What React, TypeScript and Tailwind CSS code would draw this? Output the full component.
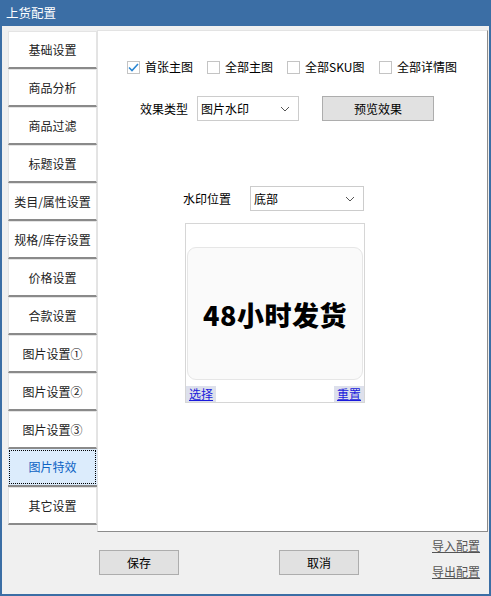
import React, { useState } from 'react';

const tabs = [
  '基础设置',
  '商品分析',
  '商品过滤',
  '标题设置',
  '类目/属性设置',
  '规格/库存设置',
  '价格设置',
  '合款设置',
  '图片设置①',
  '图片设置②',
  '图片设置③',
  '图片特效',
  '其它设置',
];

const imageTargets = [
  { label: '首张主图', width: 'w-[80px]' },
  { label: '全部主图', width: 'w-[80px]' },
  { label: '全部SKU图', width: 'w-[92px]' },
  { label: '全部详情图', width: 'w-[90px]' },
];

const Chevron: React.FC = () => (
  <svg width="10" height="6" viewBox="0 0 10 6" className="shrink-0">
    <path d="M1 1 L5 5 L9 1" fill="none" stroke="#555" strokeWidth="1" />
  </svg>
);

// Windows-style combo box
const Combo: React.FC<{ value: string; width: string }> = ({ value, width }) => (
  <div className={`${width} h-[25px] bg-white border border-[#cccccc] flex items-center justify-between pl-[3px] pr-[8px]`}>
    <span>{value}</span>
    <Chevron />
  </div>
);

const CheckBox: React.FC<{ checked: boolean; label: string; width: string; onToggle: () => void }> = ({ checked, label, width, onToggle }) => (
  <div className={`${width} flex items-center cursor-default`} onClick={onToggle}>
    <div className="w-[13px] h-[13px] border border-[#c4c4c4] bg-white flex items-center justify-center">
      {checked && (
        <svg width="11" height="9" viewBox="0 0 11 9">
          <path d="M1 4.5 L4 7.5 L10 1" fill="none" stroke="#2b87d3" strokeWidth="1.6" />
        </svg>
      )}
    </div>
    <span className="ml-[5px]">{label}</span>
  </div>
);

const App: React.FC = () => {
  const [active, setActive] = useState(11);
  const [checked, setChecked] = useState([true, false, false, false]);

  return (
    <div
      className="w-[491px] h-[596px] bg-[#3b6ea5] flex flex-col text-[12px] text-black"
      style={{ fontFamily: '"Noto Sans CJK SC", "Noto Sans", sans-serif' }}
    >
      <div className="h-[26px] pl-[6px] flex items-center text-white text-[12.5px]">上货配置</div>

      <div className="flex-1 mx-[2px] mb-[2px] bg-[#f0f0f0] flex flex-col">
        <div className="h-[506px] flex pt-[4px]">
          {/* tab strip */}
          <div className="w-[89px] ml-[6px] pt-[1px] flex flex-col">
            {tabs.map((t, i) => (
              <div
                key={t}
                onClick={() => setActive(i)}
                className={
                  i === active
                    ? 'h-[38px] bg-[#dcecfc] border-b-2 border-b-[#8a8a8a] flex'
                    : 'h-[38px] bg-white border-x border-t border-[#e4e4e4] border-b-2 border-b-[#8a8a8a] flex items-center justify-center text-[#222]'
                }
              >
                {i === active ? (
                  <div className="flex-1 m-[1px] border border-dotted border-black flex items-center justify-center text-[#0c63c4]">
                    {t}
                  </div>
                ) : (
                  t
                )}
              </div>
            ))}
          </div>

          {/* settings panel */}
          <div className="flex-1 mr-[1px] bg-white border-t border-l border-[#e3e3e3] border-r border-b border-r-[#8c8c8c] border-b-[#8c8c8c] flex flex-col">
            <div className="h-[20px] mt-[26px] pl-[29px] flex items-center">
              {imageTargets.map((c, i) => (
                <CheckBox
                  key={c.label}
                  label={c.label}
                  width={c.width}
                  checked={checked[i]}
                  onToggle={() => setChecked(prev => prev.map((v, j) => (j === i ? !v : v)))}
                />
              ))}
            </div>

            <div className="mt-[19px] pl-[42px] flex items-center">
              <span className="w-[57px]">效果类型</span>
              <Combo value="图片水印" width="w-[102px]" />
              <button className="ml-[23px] w-[112px] h-[25px] bg-[#e1e1e1] border border-[#adadad]">预览效果</button>
            </div>

            <div className="mt-[65px] pl-[85px] flex items-center">
              <span className="w-[67px]">水印位置</span>
              <Combo value="底部" width="w-[114px]" />
            </div>

            {/* watermark preview */}
            <div className="mt-[12px] ml-[87px] w-[180px] h-[180px] border border-[#d6d6d6] bg-white flex flex-col">
              <div className="mt-[23px] mx-[1px] h-[133px] rounded-[9px] border border-[#e6e6e6] bg-[#fafafa] flex items-center justify-center">
                <span className="text-[27px] font-black tracking-[0.5px] leading-none mt-[2px]">48小时发货</span>
              </div>
              <div className="mt-[6px] flex justify-between">
                <span className="px-[3px] h-[16px] leading-[16px] bg-[#dde0ec] text-[#1a1adb] underline">选择</span>
                <span className="px-[3px] h-[16px] leading-[16px] bg-[#dde0ec] text-[#1a1adb] underline">重置</span>
              </div>
            </div>
          </div>
        </div>

        {/* footer buttons */}
        <div className="flex-1 flex items-start">
          <button className="mt-[18px] ml-[97px] w-[80px] h-[25px] bg-[#e1e1e1] border border-[#adadad]">保存</button>
          <button className="mt-[18px] ml-[100px] w-[80px] h-[25px] bg-[#e1e1e1] border border-[#adadad]">取消</button>
          <div className="ml-[73px] mt-[7px] flex flex-col gap-[12px] text-[#555] underline">
            <span className="leading-[14px]">导入配置</span>
            <span className="leading-[14px]">导出配置</span>
          </div>
        </div>
      </div>
    </div>
  );
};

export default App;
